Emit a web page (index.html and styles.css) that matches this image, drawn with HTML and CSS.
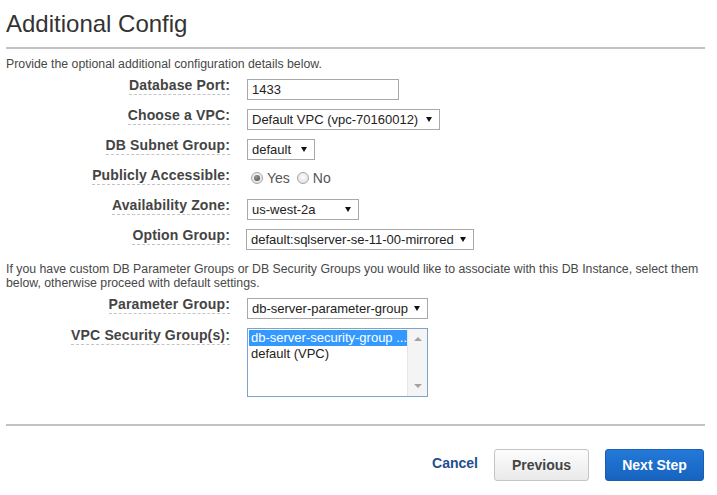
FILE: index.html
```html
<!DOCTYPE html>
<html>
<head>
<meta charset="utf-8">
<link rel="stylesheet" href="styles.css">
</head>
<body>
<div class="page">
  <h1 class="title">Additional Config</h1>
  <div class="rule"></div>
  <p class="intro">Provide the optional additional configuration details below.</p>
  <div class="form">
    <span class="lbl">Database Port:</span>
    <div class="ctl"><div class="textbox w-port">1433</div></div>

    <span class="lbl">Choose a VPC:</span>
    <div class="ctl"><div class="select w-vpc"><span>Default VPC (vpc-70160012)</span><i class="arrow"></i></div></div>

    <span class="lbl">DB Subnet Group:</span>
    <div class="ctl"><div class="select w-subnet"><span>default</span><i class="arrow"></i></div></div>

    <span class="lbl">Publicly Accessible:</span>
    <div class="ctl radios">
      <span class="radio checked"></span><span class="rtext">Yes</span>
      <span class="radio"></span><span class="rtext">No</span>
    </div>

    <span class="lbl">Availability Zone:</span>
    <div class="ctl"><div class="select w-zone"><span>us-west-2a</span><i class="arrow"></i></div></div>

    <span class="lbl">Option Group:</span>
    <div class="ctl"><div class="select w-option"><span>default:sqlserver-se-11-00-mirrored</span><i class="arrow"></i></div></div>
  </div>
  <p class="intro intro2">If you have custom DB Parameter Groups or DB Security Groups you would like to associate with this DB Instance, select them below, otherwise proceed with default settings.</p>
  <div class="form form2">
    <span class="lbl">Parameter Group:</span>
    <div class="ctl"><div class="select w-param"><span>db-server-parameter-group</span><i class="arrow"></i></div></div>

    <span class="lbl lbl-list">VPC Security Group(s):</span>
    <div class="ctl">
      <div class="listbox">
        <div class="items">
          <div class="item selected">db-server-security-group ...</div>
          <div class="item">default (VPC)</div>
        </div>
        <div class="scroll">
          <i class="up"></i>
          <i class="down"></i>
        </div>
      </div>
    </div>
  </div>
  <div class="rule rule2"></div>
  <div class="actions">
    <a class="cancel">Cancel</a>
    <button class="btn prev">Previous</button>
    <button class="btn next">Next Step</button>
  </div>
</div>
</body>
</html>
```

FILE: styles.css
```css
body {
  margin: 0;
  background: #fff;
  font-family: "Liberation Sans", Arial, sans-serif;
  color: #444;
}
.page {
  margin-left: 6px;
  width: 699px;
}
.title {
  font-size: 24px;
  font-weight: normal;
  line-height: 28px;
  margin: 10px 0 9px;
  color: #333;
}
.rule {
  height: 2px;
  background: #c2c2c2;
}
.intro {
  font-size: 12.3px;
  line-height: 14px;
  margin: 8px 0 8px;
  color: #484848;
}
.intro2 {
  margin: 3px 0 8px;
}
.form {
  display: grid;
  grid-template-columns: 224px auto;
  column-gap: 17px;
  grid-auto-rows: minmax(30px, auto);
  justify-items: start;
  align-items: start;
}
.lbl {
  justify-self: end;
  font-weight: bold;
  font-size: 14px;
  line-height: 16px;
  margin-top: -2px;
  padding-bottom: 1px;
  border-bottom: 1px dashed #c4c4c4;
  color: #444;
  letter-spacing: 0.15px;
}
.lbl-list {
  margin-top: -1px;
}
.ctl {
  display: flex;
  align-items: center;
}
.textbox, .select {
  box-sizing: border-box;
  height: 21px;
  border: 1px solid #a9a9a9;
  background: #fff;
  font-size: 13px;
  color: #222;
  display: flex;
  align-items: center;
  padding-left: 4px;
}
.textbox {
  border: 1px solid #a8a8a8;
}
.select {
  justify-content: space-between;
  padding-right: 7px;
}
.arrow {
  width: 0;
  height: 0;
  border-left: 3px solid transparent;
  border-right: 3px solid transparent;
  border-top: 5px solid #111;
}
.w-port { width: 152px; }
.w-vpc { width: 193px; }
.w-subnet { width: 68px; }
.w-zone { width: 112px; }
.w-option { width: 228px; margin-left: -1px; }
.w-param { width: 181px; }
.radios {
  height: 21px;
  margin-top: -2px;
}
.radio {
  box-sizing: border-box;
  width: 12px;
  height: 12px;
  border-radius: 50%;
  border: 1px solid #a5a5a5;
  background: radial-gradient(circle at 50% 40%, #fdfdfd 0%, #e4e4e4 70%);
  margin: 0 4px 0 4px;
  position: relative;
}
.radio.checked::after {
  content: "";
  position: absolute;
  left: 2px;
  top: 2px;
  width: 6px;
  height: 6px;
  border-radius: 50%;
  background: radial-gradient(circle at 40% 35%, #9a9a9a 0%, #555 80%);
}
.rtext {
  font-size: 14px;
  color: #555;
  margin-right: 3px;
}
.listbox {
  box-sizing: border-box;
  width: 181px;
  height: 69px;
  border: 1px solid #7da2ce;
  display: flex;
  background: #fff;
}
.items {
  flex: 1;
  padding: 1px 0 0 1px;
}
.item {
  font-size: 13px;
  line-height: 16px;
  height: 16px;
  padding-left: 2px;
  color: #222;
  white-space: nowrap;
}
.item.selected {
  background: #3399ff;
  color: #fff;
}
.scroll {
  width: 20px;
  background: #f4f4f4;
  border-left: 1px solid #e6e6e6;
  display: flex;
  flex-direction: column;
  justify-content: space-between;
  align-items: center;
  padding: 8px 0 8px;
}
.scroll .up {
  width: 0; height: 0;
  border-left: 4px solid transparent;
  border-right: 4px solid transparent;
  border-bottom: 4px solid #a3a3a3;
}
.scroll .down {
  width: 0; height: 0;
  border-left: 4px solid transparent;
  border-right: 4px solid transparent;
  border-top: 4px solid #a3a3a3;
}
.rule2 {
  margin-top: 27px;
}
.actions {
  display: flex;
  justify-content: flex-end;
  align-items: center;
  margin-top: 23px;
  padding-right: 1px;
}
.cancel {
  font-size: 14px;
  font-weight: bold;
  color: #1f4f8f;
  margin-bottom: 4px;
  margin-right: 16px;
}
.btn {
  box-sizing: border-box;
  height: 32px;
  font-family: "Liberation Sans", Arial, sans-serif;
  font-size: 14px;
  font-weight: bold;
  border-radius: 3px;
  padding: 0;
}
.prev {
  width: 95px;
  color: #444;
  border: 1px solid #c4c4c4;
  background: linear-gradient(#fdfdfd, #e9e9e9);
  margin-right: 16px;
}
.next {
  width: 99px;
  color: #fff;
  border: 1px solid #1b5db0;
  background: linear-gradient(#2479d8, #1763bf);
}
```
